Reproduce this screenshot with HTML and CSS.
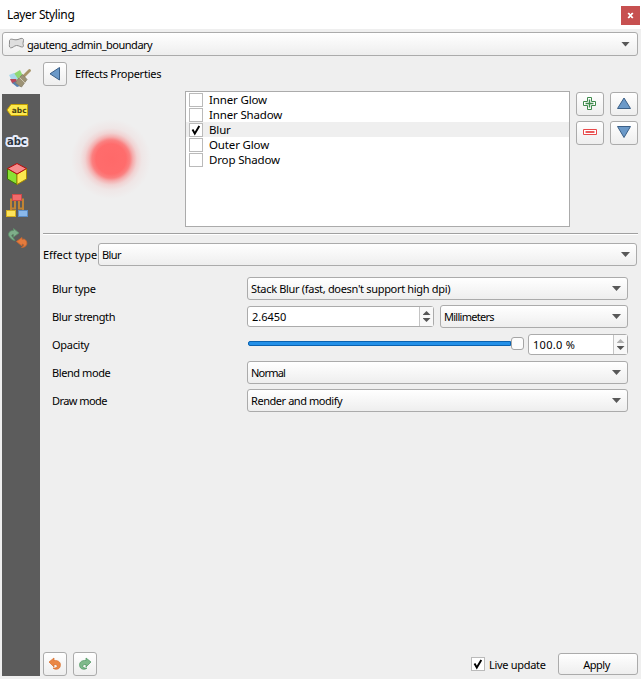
FILE: index.html
```
<!DOCTYPE html>
<html lang="en">
<head>
<meta charset="utf-8">
<title>Layer Styling</title>
<link rel="stylesheet" href="styles.css">
</head>
<body>
<header class="titlebar"><span class="t-title">Layer Styling</span>
  <button class="close" aria-label="Close"><svg width="19" height="19" viewBox="0 0 19 19"><path d="M7.200 7l4.600 5M11.800 7l-4.600 5" stroke="#fff" stroke-width="1.800"/><path d="M7 7.500h1.500M10.500 7.500h1.500M7 11.500h1.500M10.500 11.500h1.500" stroke="#fff"/></svg></button>
</header>
<div class="combo layer">
  <svg class="poly" width="17" height="13" viewBox="0 0 17 13"><path d="M1.500 3.500C2.500 1 5 2.800 8 2.800C11 2.800 12.500 .8 14.600 1.500C16.500 2.500 15 4.500 15 6.500C15.200 8.500 16 9.300 14.800 9.900C12.500 10.500 11 8.300 8.500 8.500C6 8.700 4.500 11.300 2.500 10.800C.8 10 1.500 8 1.500 6Z" fill="#dedede" stroke="#8c8c8c"/></svg>
  <span class="t-layer">gauteng_admin_boundary</span><i class="arrow"></i>
</div>
<div class="main">
  <nav class="side">
    <div class="tab active"><svg width="24" height="22" viewBox="0 0 24 22"><path d="M2 9L12 3l3 6-8 5z" fill="#8fd873"/><path d="M1 8l5-2 4 6-6 2z" fill="#a9d7ea"/><path d="M2 12l6 0 3 7-7-3z" fill="#b9485a"/><path d="M4 16l5-2 3 5-3 1z" fill="#5580b0"/><path d="M21.500 3.500L15.500 9.500" stroke="#a89468" stroke-width="2.800" stroke-linecap="round"/><path d="M10 12l4.500-4.500 4.500 5-5.500 7.500c-2.500-1-4-3-6-4z" fill="#9d9376" stroke="#857d67" stroke-width=".8"/><path d="M11.500 10.500l5.500 5.500" stroke="#cdc8b4"/></svg></div>
    <div class="rail">
      <svg width="24" height="32" viewBox="0 0 24 32"><path d="M2 16L6 10.500H22.500V21.500H6z" fill="#fce94f" stroke="#c4a000"/><text x="6.800" y="18.700" class="abc small">abc</text></svg>
      <svg width="24" height="32" viewBox="0 0 24 32"><text x="2" y="19" class="abc big">abc</text></svg>
      <svg width="24" height="32" viewBox="0 0 24 32"><path d="M2.500 10.500L12 16V26.500L2.500 21z" fill="#8ae234" stroke="#3b7804"/><path d="M21.500 10.500L12 16V26.500L21.500 21z" fill="#fce94f" stroke="#a78a00"/><path d="M12 5.500L21.500 10.500 12 16 2.500 10.500z" fill="#f58b8b" stroke="#b80b0b"/></svg>
      <svg width="24" height="32" viewBox="0 0 24 32"><path d="M9 9.500H6V22M15 9.500H18V22M10 11V18.500H6M14 11V18.500H18" fill="none" stroke="#c08434" stroke-width="2"/><rect x="7.500" y="4.500" width="9" height="6" fill="#ef6b6b" stroke="#cf4a4a"/><rect x="1.500" y="20.500" width="9" height="6" fill="#fce45c" stroke="#d3ae1d"/><rect x="13.500" y="20.500" width="9" height="6" fill="#8ab8ea" stroke="#5c8dc6"/></svg>
      <svg width="24" height="32" viewBox="0 0 24 32"><path d="M6 16.500C2 13.500 3 8.500 8.500 8.500V6.500L14 11 8.500 15V12.500C6.500 12.500 6 13.500 8 15.500L10 18.500C8.500 18.500 7 17.500 6 16.500Z" fill="#7fae8a" stroke="#5d9069" stroke-width=".8"/><path d="M20 17.500C23.500 20.500 22 25.500 16.500 25.500C18.500 24.500 20 22.500 17 22V24L11.500 19.500 17 15.500V17.500C18 17 19 17 20 17.500Z" fill="#e47b3d" stroke="#c9672f" stroke-width=".8"/></svg>
    </div>
  </nav>
  <main class="content">
    <div class="top">
      <div class="left">
        <div class="head"><button class="btn small-btn"><svg width="14" height="16" viewBox="0 0 14 16"><path d="M11.500 1.500V14L2 7.800z" fill="#6b99c8" stroke="#3a5f87"/></svg></button><span class="t-head">Effects Properties</span></div>
        <div class="preview"></div>
      </div>
      <div class="list">
        <label class="item"><i class="check"></i><span>Inner Glow</span></label>
        <label class="item"><i class="check"></i><span>Inner Shadow</span></label>
        <label class="item selected"><i class="check"><svg width="12" height="12" viewBox="0 0 12 12"><path d="M2.500 5.500l2.300 4L9.300 2" fill="none" stroke="#000" stroke-width="1.900"/></svg></i><span>Blur</span></label>
        <label class="item"><i class="check"></i><span>Outer Glow</span></label>
        <label class="item"><i class="check"></i><span>Drop Shadow</span></label>
      </div>
      <div class="tools">
        <button class="btn"><svg width="16" height="16" viewBox="0 0 16 16"><path d="M5.500 1.500h4v4h4v4h-4v4h-4v-4h-4v-4h4z" fill="#fff" stroke="#3f8a4c"/><path d="M7.500 3.500v8M3.500 7.500h8" stroke="#3f8a4c" stroke-width="1.400"/></svg></button>
        <button class="btn"><svg width="16" height="16" viewBox="0 0 16 16"><path d="M8 2L14.500 12.500H1.500z" fill="#6b99c8" stroke="#3a5f87"/></svg></button>
        <button class="btn"><svg width="16" height="16" viewBox="0 0 16 16"><path d="M1.500 4.500h13v5h-13z" fill="#fff" stroke="#e8494a"/><path d="M3.500 7h9" stroke="#e8494a" stroke-width="1.800"/></svg></button>
        <button class="btn"><svg width="16" height="16" viewBox="0 0 16 16"><path d="M8 12.500L14.500 1.500H1.500z" fill="#6b99c8" stroke="#3a5f87"/></svg></button>
      </div>
    </div>
    <hr>
    <div class="effect"><span class="t-effect">Effect type</span><div class="combo"><span class="v-effect">Blur</span><i class="arrow"></i></div></div>
    <div class="form">
      <span class="label l-type">Blur type</span><div class="combo"><span class="v-type">Stack Blur (fast, doesn't support high dpi)</span><i class="arrow"></i></div>
      <span class="label l-strength">Blur strength</span><div class="pair"><div class="spin strength"><span>2.6450</span><i class="steps"><b class="up"></b><b class="down"></b></i></div><div class="combo"><span class="v-unit">Millimeters</span><i class="arrow"></i></div></div>
      <span class="label l-opacity">Opacity</span><div class="opacity"><div class="slider"><i class="track"></i><i class="handle"></i></div><div class="spin percent"><span class="v-percent">100.0 %</span><i class="steps"><b class="up off"></b><b class="down"></b></i></div></div>
      <span class="label l-blend">Blend mode</span><div class="combo"><span class="v-blend">Normal</span><i class="arrow"></i></div>
      <span class="label l-draw">Draw mode</span><div class="combo"><span class="v-draw">Render and modify</span><i class="arrow"></i></div>
    </div>
    <footer class="foot">
      <button class="btn small-btn"><svg width="16" height="16" viewBox="0 0 16 16"><path d="M2 6L7 2V4.500C12 4 14.500 7 13 11C12 13.500 8 14 6 12C9 12.500 11 11 10 9.500C9.500 8.500 8.500 8.500 7 8.500V11z" fill="#ea8745" stroke="#d86e2c" stroke-width=".7"/></svg></button>
      <button class="btn small-btn"><svg width="16" height="16" viewBox="0 0 16 16"><path d="M14 6L9 2V4.500C4 4 1.500 7 3 11C4 13.500 8 14 10 12C7 12.500 5 11 6 9.500C6.500 8.500 7.500 8.500 9 8.500V11z" fill="#7fb98b" stroke="#4c9560" stroke-width=".7"/></svg></button>
      <label class="live"><i class="check"><svg width="12" height="12" viewBox="0 0 12 12"><path d="M2.500 5.500l2.300 4L9.300 2" fill="none" stroke="#000" stroke-width="1.900"/></svg></i><span class="t-live">Live update</span></label>
      <button class="btn apply"><span class="t-apply">Apply</span></button>
    </footer>
  </main>
</div>
</body>
</html>
```
FILE: styles.css
```
* { box-sizing: border-box; }
body { margin: 0; width: 641px; height: 679px; overflow: hidden; display: flex; flex-direction: column; background: #efefef; color: #000; font: 11px/14px "Noto Sans", "Open Sans", sans-serif; white-space: nowrap; }
svg { display: block; flex: none; }
button { font: inherit; padding: 0; border: 0; color: inherit; }
i, b { display: block; flex: none; }

.titlebar { height: 29px; flex: none; background: #fff; display: flex; justify-content: space-between; align-items: flex-start; padding: 6px 1px 0 7px; font-size: 12px; line-height: 17px; }
.close { width: 19px; height: 19px; background: #c75050; }

.combo, .btn { border: 1px solid #ababab; border-radius: 3px; background: linear-gradient(#fff, #eeeeee); }
.combo { height: 23px; flex: 1; display: flex; align-items: center; padding: 1px 6px 0 3px; }
.combo .arrow { margin-left: auto; margin-top: -1px; width: 9px; height: 5px; background: #585858; clip-path: polygon(0 0, 100% 0, 50% 100%); }
.combo.layer { height: 24px; flex: none; margin: 3px 3px 0 2px; padding-left: 5px; }
.layer .poly { margin: -3px 2px 0 0; }
.layer .arrow { margin-right: 1px; }

.main { flex: 1; display: flex; min-height: 0; padding: 6px 3px 3px 2px; }
.side { width: 38px; flex: none; display: flex; flex-direction: column; }
.tab { height: 32px; flex: none; padding: 5px 0 0 6px; }
.rail { flex: 1; background: #5c5c5c; display: flex; flex-direction: column; padding-left: 3px; }
.abc { font-family: "DejaVu Sans", sans-serif; font-weight: bold; fill: #2c3440; }
.abc.small { font-size: 7.500px; fill: #4a4310; }
.abc.big { font-size: 10px; stroke: #e8ecfa; stroke-width: 4px; stroke-linejoin: round; paint-order: stroke; }

.content { flex: 1; display: flex; flex-direction: column; padding-left: 3px; }
.top { display: flex; height: 166px; }
.left { width: 142px; flex: none; }
.head { display: flex; align-items: center; gap: 8px; }
.btn { width: 28px; height: 25px; display: flex; align-items: center; justify-content: center; }
.small-btn { width: 24px; height: 24px; }
.preview { width: 136px; height: 146px; background: radial-gradient(circle at 68px 73px, #ff6969 0, #ff6c6c 15px, #fb8080 19px, #f5adad 22px, #f1d3d3 26px, #efe6e6 31px, #efefef 40px); }
.list { width: 385px; height: 136px; margin-top: 29px; border: 1px solid #ababab; background: #fff; font-size: 11.500px; line-height: 15px; letter-spacing: -.15px; }
.item { height: 15px; display: flex; align-items: center; gap: 6px; padding-left: 3px; }
.item.selected { background: #efefef; }
.check { width: 14px; height: 14px; border: 1px solid #bababa; background: #fff; }
.tools { display: grid; grid-template-columns: 28px 28px; grid-auto-rows: 24px; gap: 5px 6px; margin: 30px 0 0 6px; height: 54px; }
.tools .btn { height: 24px; }
hr { width: 595px; height: 2px; margin: 5px 0 0; border: 0; border-top: 1px solid #a0a0a0; border-bottom: 1px solid #fff; }
.effect { display: flex; align-items: center; margin-top: 8px; padding-right: 1px; }
.t-effect { width: 55px; padding-top: 1px; }
.form { display: grid; grid-template-columns: 195px 381px; grid-auto-rows: 23px; row-gap: 5px; align-items: center; padding-left: 9px; margin-top: 11px; }
.label { padding-top: 1px; }
.pair { display: flex; align-items: center; gap: 6px; }
.spin { height: 21px; border: 1px solid #ababab; border-radius: 3px; background: #fff; display: flex; align-items: center; padding: 1px 0 0 4px; }
.strength { width: 187px; flex: none; }
.percent { width: 100px; flex: none; }
.steps { width: 14px; height: 19px; margin: -1px 0 0 auto; border-left: 1px solid #c4c4c4; background: #f8f8f8; display: flex; flex-direction: column; align-items: center; justify-content: center; gap: 3px; }
.up, .down { width: 8px; height: 4px; background: #555; }
.up { clip-path: polygon(0 100%, 100% 100%, 50% 0); }
.down { clip-path: polygon(0 0, 100% 0, 50% 100%); }
.up.off { background: #b0b0b0; }
.opacity { display: flex; align-items: center; justify-content: space-between; }
.slider { display: flex; align-items: center; width: 277px; padding-left: 1px; margin-top: -2px; }
.track { flex: 1; height: 5px; border: 1px solid #0b62b0; border-radius: 2px 0 0 2px; background: #2390e8; }
.handle { width: 13px; height: 13px; border: 1px solid #a5a5a5; border-radius: 3px; background: #fcfcfc; }

.foot { margin-top: auto; display: flex; align-items: center; }
.foot .small-btn + .small-btn { margin-left: 6px; }
.live { display: flex; align-items: center; gap: 4px; margin-left: auto; margin-right: 12px; }
.live span { width: 57px; padding-top: 1px; }
.foot .apply { width: 80px; height: 22px; }

.t-title { letter-spacing: -.35px; }
.t-layer { letter-spacing: -.5px; }
.t-head { letter-spacing: -.25px; }
.t-effect { letter-spacing: -.03px; }
.v-effect { letter-spacing: -.6px; }
.l-type { letter-spacing: -.35px; }
.l-strength { letter-spacing: -.4px; }
.l-opacity { letter-spacing: -.3px; }
.l-blend { letter-spacing: -.42px; }
.l-draw { letter-spacing: -.55px; }
.v-type { letter-spacing: -.32px; }
.v-unit { letter-spacing: -.72px; }
.v-percent { letter-spacing: .3px; }
.v-blend { letter-spacing: -.8px; }
.v-draw { letter-spacing: -.44px; }
.t-live { letter-spacing: -.3px; }
.t-apply { letter-spacing: -.5px; padding: 1px 3px 0 0; }
```
